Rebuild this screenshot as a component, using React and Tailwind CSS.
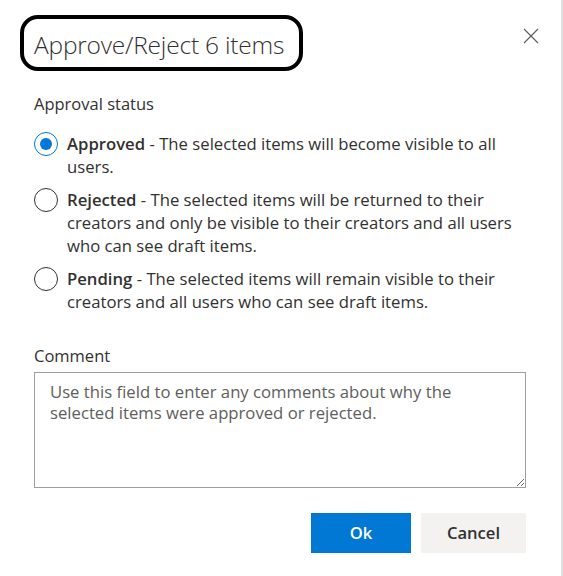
import React, { useState } from 'react';

const options = [
  {
    id: 'approved',
    label: 'Approved',
    desc: 'The selected items will become visible to all users.',
  },
  {
    id: 'rejected',
    label: 'Rejected',
    desc: 'The selected items will be returned to their creators and only be visible to their creators and all users who can see draft items.',
  },
  {
    id: 'pending',
    label: 'Pending',
    desc: 'The selected items will remain visible to their creators and all users who can see draft items.',
  },
];

const App = () => {
  const [status, setStatus] = useState('approved');

  return (
    <div className="w-[563px] h-[576px] bg-white flex text-[#323130]" style={{ fontFamily: '"Open Sans", "Noto Sans", sans-serif' }}>
      <div className="flex-1 flex flex-col pl-[34px] pr-[35px]">
        {/* Header */}
        <div className="flex items-start justify-between pt-[26px]">
          <div className="relative">
            <h1 className="text-[24.5px] font-light leading-[38px] tracking-[-0.2px]">Approve/Reject 6 items</h1>
            <div className="absolute -left-[14px] -right-[19px] -top-[11px] -bottom-[7px] border-[4px] border-black rounded-[18px]" />
          </div>
          <button type="button" className="mt-[1px] mr-[-14px] w-[18px] h-[18px] flex items-center justify-center text-[#605e5c]">
            <svg width="16" height="16" viewBox="0 0 16 16" fill="none" stroke="currentColor" strokeWidth="1.2">
              <path d="M1 1L15 15M15 1L1 15" />
            </svg>
          </button>
        </div>

        {/* Approval status */}
        <div className="mt-[29px] text-[16.5px] leading-[22px]">Approval status</div>
        <div className="mt-[17px] flex flex-col gap-[10px]">
          {options.map(o => {
            const on = status === o.id;
            return (
              <label key={o.id} className="flex items-start gap-[9px] cursor-pointer" onClick={() => setStatus(o.id)}>
                <span className={`shrink-0 w-[24px] h-[24px] rounded-full border flex items-center justify-center ${on ? 'border-[#0078d4]' : 'border-[#323130]'}`}>
                  {on && <span className="w-[12px] h-[12px] rounded-full bg-[#0078d4]" />}
                </span>
                <span className="text-[16.7px] leading-[23px] max-w-[448px]">
                  <span className="font-semibold">{o.label}</span> - {o.desc}
                </span>
              </label>
            );
          })}
        </div>

        {/* Comment */}
        <div className="mt-[32px] text-[16.5px] leading-[22px]">Comment</div>
        <textarea
          className="mt-[5px] h-[116px] w-full border border-[#a19f9d] pl-[15px] pr-[40px] py-[8px] text-[16.7px] leading-[21px] text-[#323130] placeholder:text-[#605e5c] outline-none"
          style={{ fontFamily: '"Open Sans", "Noto Sans", sans-serif' }}
          placeholder="Use this field to enter any comments about why the selected items were approved or rejected."
        />

        {/* Footer */}
        <div className="mt-[25px] flex justify-end gap-[10px]">
          <button type="button" className="w-[100px] h-[40px] bg-[#0078d4] text-white font-semibold text-[16.6px]">Ok</button>
          <button type="button" className="w-[105px] h-[40px] bg-[#f3f2f1] text-[#323130] font-semibold text-[16.6px]">Cancel</button>
        </div>
      </div>
      <div className="w-[2px] bg-[#e1e1e1]" />
    </div>
  );
};

export default App;
